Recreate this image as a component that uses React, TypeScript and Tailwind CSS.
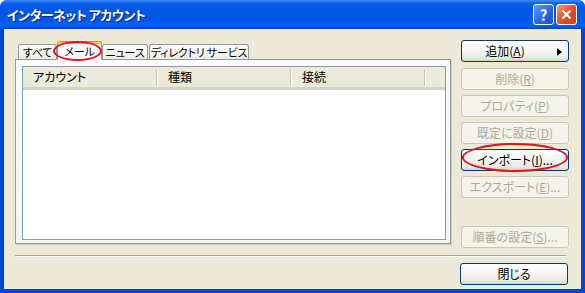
import * as React from "react"

function Mn({ c }: { c: string }) {
  return <span className="underline underline-offset-[1px]">{c}</span>
}

function XpButton({
  children,
  disabled,
  arrow,
  className = "",
}: {
  children: React.ReactNode
  disabled?: boolean
  arrow?: boolean
  className?: string
}) {
  return (
    <div
      className={`relative flex h-[22px] w-[108px] items-center justify-center whitespace-nowrap rounded-[3px] border text-[12px] leading-none ${
        disabled
          ? "border-[#C9C7BA] bg-[#F5F4EA] text-[#ACA899]"
          : "border-[#003C74] bg-[linear-gradient(to_bottom,#FFFFFF_0%,#F6F5F1_50%,#E9E8E0_85%,#D6D0C5_100%)] text-black"
      } ${className}`}
    >
      <span className={arrow ? "-ml-[20px]" : ""}>{children}</span>
      {arrow && (
        <svg className="absolute right-[6px] top-[7px]" width="5" height="8" viewBox="0 0 5 8">
          <path d="M0 0 L5 4 L0 8 Z" fill="#000" />
        </svg>
      )}
    </div>
  )
}

function Tab({ label, active, w }: { label: string; active?: boolean; w: string }) {
  return (
    <div
      className={`flex items-center justify-center whitespace-nowrap rounded-t-[3px] border border-b-0 text-[11px] leading-none tracking-[-0.2px] text-black ${w} ${
        active
          ? "relative z-10 -mb-px h-[19px] border-[#919B9C] border-t-[#E68B2C] bg-[#FCFCFE] shadow-[inset_0_2px_0_#FFC73C]"
          : "mt-[3px] h-[15px] border-[#919B9C] bg-[linear-gradient(to_bottom,#FFFFFF,#ECEBE5)]"
      }`}
    >
      {label}
    </div>
  )
}

function HeaderCol({ label, w }: { label: string; w: string }) {
  return (
    <div className={`relative flex h-full items-center pl-[10px] ${w}`}>
      <span>{label}</span>
      <div className="absolute right-0 top-[3px] h-[16px] w-[2px] border-r border-l border-r-white border-l-[#C7C5B2]" />
    </div>
  )
}

export default function App() {
  return (
    <div className="relative flex h-[293px] w-[585px] flex-col overflow-hidden rounded-t-[7px] bg-[#0046D5] font-['Noto_Sans_CJK_JP','Noto_Sans',sans-serif] [font-feature-settings:'palt']">
      {/* Title bar */}
      <div className="flex h-[29px] items-center justify-between bg-[linear-gradient(to_bottom,#3D8DF5_0%,#0A60EB_12%,#0055E5_35%,#0058EB_70%,#0064F7_86%,#0052DE_95%,#0043C8_100%)] pl-[7px] pr-[8px]">
        <span className="text-[13px] font-bold tracking-[-0.5px] text-white [text-shadow:1px_1px_0_#0A1E6E]">
          インターネット アカウント
        </span>
        <div className="flex gap-[2px]">
          <div className="flex h-[21px] w-[21px] items-center justify-center rounded-[3px] border border-white bg-[linear-gradient(135deg,#5C9BFF,#2663E0_60%,#1A4FC8)] text-[15px] font-bold leading-none text-white">
            ?
          </div>
          <div className="flex h-[21px] w-[21px] items-center justify-center rounded-[3px] border border-white bg-[linear-gradient(135deg,#F29B7A,#E0532B_50%,#C8401A)]">
            <svg width="11" height="11" viewBox="0 0 11 11">
              <path d="M1.5 1.5 L9.5 9.5 M9.5 1.5 L1.5 9.5" stroke="#fff" strokeWidth="2.2" />
            </svg>
          </div>
        </div>
      </div>

      {/* Body */}
      <div className="mx-[4px] mb-[4px] flex flex-1 flex-col bg-[#ECE9D8] pl-[11px] pt-[11px]">
        <div className="flex gap-[10px]">
          {/* Left: tabs + panel */}
          <div className="flex w-[436px] flex-col pt-px">
            <div className="flex h-[18px] items-end pl-[3px]">
              <Tab label="すべて" w="w-[39px]" />
              <Tab label="メール" active w="w-[45px]" />
              <Tab label="ニュース" w="w-[46px]" />
              <Tab label="ディレクトリ サービス" w="w-[100px] ml-px" />
            </div>
            <div className="h-[185px] border border-[#919B9C] bg-[linear-gradient(to_bottom,#FCFCFE,#F4F3EE)] pb-[3px] pl-[6px] pr-[4px] pt-[6px] shadow-[1px_1px_0_#D0CEBF]">
              <div className="flex h-full flex-col border border-[#7F9DB9] bg-white">
                <div className="flex h-[23px] border-b-[3px] border-b-[#D6D2C2] bg-[#EBEADB] text-[12px] leading-none text-black">
                  <HeaderCol label="アカウント" w="w-[135px]" />
                  <HeaderCol label="種類" w="w-[134px]" />
                  <HeaderCol label="接続" w="w-[134px]" />
                </div>
              </div>
            </div>
          </div>

          {/* Right: buttons */}
          <div className="flex flex-col">
            <XpButton arrow>
              追加(<Mn c="A" />)
            </XpButton>
            <XpButton disabled className="mt-[6px]">
              削除(<Mn c="R" />)
            </XpButton>
            <XpButton disabled className="mt-[5px]">
              プロパティ(<Mn c="P" />)
            </XpButton>
            <XpButton disabled className="mt-[5px]">
              既定に設定(<Mn c="D" />)
            </XpButton>
            <XpButton className="mt-[5px]">
              インポート(<Mn c="I" />)...
            </XpButton>
            <XpButton disabled className="mt-[5px]">
              エクスポート(<Mn c="E" />)...
            </XpButton>
            <XpButton disabled className="mt-[28px]">
              順番の設定(<Mn c="S" />)...
            </XpButton>
          </div>
        </div>

        {/* Separator */}
        <div className="mt-[7px] w-[551px] border-b border-t border-b-white border-t-[#ACA899]" />

        <div className="mt-[6px] flex w-[553px] justify-end">
          <XpButton>閉じる</XpButton>
        </div>
      </div>

      {/* Annotation ellipses */}
      <div className="pointer-events-none absolute left-[53px] top-[41px] z-20 h-[20px] w-[49px] rounded-[50%] border-2 border-[#E8101C]" />
      <div className="pointer-events-none absolute left-[462px] top-[143px] z-20 h-[29px] w-[106px] rounded-[50%] border-2 border-[#E8101C]" />
    </div>
  )
}
